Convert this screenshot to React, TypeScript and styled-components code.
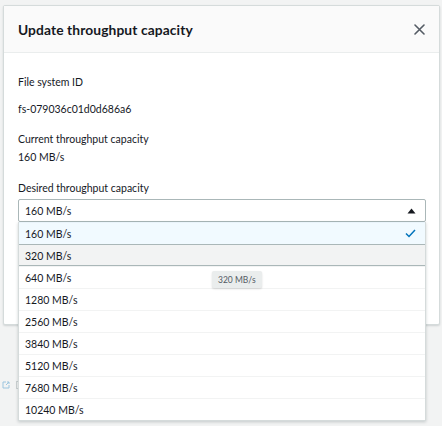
import React from "react";
import styled, { createGlobalStyle } from "styled-components";

const Global = createGlobalStyle`
  html, body { margin: 0; padding: 0; background: #f2f3f3; }
  body { font-family: Lato, "Liberation Sans", Arial, sans-serif; color: #16191f; }
  * { box-sizing: border-box; }
`;

const Page = styled.div`
  position: relative;
  width: 442px;
  height: 426px;
  padding: 5px 2px 0 3px;
  overflow: hidden;
`;

const Modal = styled.div`
  width: 437px;
  background: #fff;
  border: 1px solid #d5dbdb;
  border-radius: 2px;
  box-shadow: 0 1px 2px rgba(0, 28, 36, 0.15);
`;

const Header = styled.div`
  height: 47px;
  background: #fafafa;
  border-bottom: 1px solid #eaeded;
  display: flex;
  align-items: center;
  justify-content: space-between;
  padding: 0 13px 0 14px;
`;

const Title = styled.h2`
  margin: 0;
  font-size: 13.8px;
  font-weight: 700;
  color: #16191f;
  letter-spacing: 0.1px;
`;

const Close = styled.button`
  border: 0;
  background: none;
  padding: 0;
  width: 14px;
  height: 14px;
  display: flex;
  align-items: center;
  justify-content: center;
`;

const Body = styled.div`
  padding: 22px 13px 0 14px;
  display: flex;
  flex-direction: column;
`;

const Text = styled.div<{ $mt?: number }>`
  font-size: 10.5px;
  line-height: 14px;
  margin-top: ${(p) => p.$mt ?? 0}px;
  color: #16191f;
`;

const SelectWrap = styled.div`
  position: relative;
  margin-top: 4px;
`;

const SelectBox = styled.div`
  height: 23px;
  border: 1px solid #aab7b8;
  border-radius: 2px;
  display: flex;
  align-items: center;
  justify-content: space-between;
  padding: 0 9px 0 6px;
  font-size: 10.5px;
  background: #fff;
`;

const Footer = styled.div`
  margin-top: 62px;
  height: 40px;
  border-top: 1px solid #f2f3f3;
`;

const List = styled.ul`
  position: absolute;
  top: 23px;
  left: 0;
  right: 0;
  margin: 0;
  padding: 0;
  list-style: none;
  background: #fff;
  border: 1px solid #d5dbdb;
  border-top: 0;
  box-shadow: 0 1px 3px rgba(0, 28, 36, 0.2);
  z-index: 2;
`;

const Item = styled.li<{ $state?: "selected" | "hover" }>`
  height: 22px;
  display: flex;
  align-items: center;
  justify-content: space-between;
  padding: 0 9px 0 6px;
  font-size: 10.5px;
  border-top: 1px solid
    ${(p) => (p.$state === "hover" ? "#aab7b8" : p.$state === "selected" ? "#eaf4fb" : "#f2f3f3")};
  box-shadow: ${(p) => (p.$state === "hover" ? "inset 0 -1px 0 #aab7b8" : "none")};
  background: ${(p) => (p.$state === "selected" ? "#f1faff" : p.$state === "hover" ? "#f2f3f3" : "#fff")};
  & + & { }
`;

const Tooltip = styled.div`
  position: absolute;
  left: 212px;
  top: 271px;
  height: 17px;
  padding: 0 6px;
  background: #eaeded;
  border-radius: 2px;
  box-shadow: 0 1px 2px rgba(0, 0, 0, 0.15);
  font-size: 8.5px;
  color: #545b64;
  display: flex;
  align-items: center;
  z-index: 3;
`;

const Ghost = styled.div`
  position: absolute;
  left: 2px;
  top: 381px;
  display: flex;
  gap: 6px;
  opacity: 0.35;
`;

const options = ["160", "320", "640", "1280", "2560", "3840", "5120", "7680", "10240"];

export default function App() {
  return (
    <>
      <Global />
      <Page>
        <Modal>
          <Header>
            <Title>Update throughput capacity</Title>
            <Close aria-label="Close">
              <svg width="11" height="11" viewBox="0 0 11 11">
                <path d="M1 1l9 9M10 1l-9 9" stroke="#545b64" strokeWidth="1.6" strokeLinecap="round" />
              </svg>
            </Close>
          </Header>
          <Body>
            <Text>File system ID</Text>
            <Text $mt={13}>fs-079036c01d0d686a6</Text>
            <Text $mt={16}>Current throughput capacity</Text>
            <Text $mt={4}>160 MB/s</Text>
            <Text $mt={17}>Desired throughput capacity</Text>
            <SelectWrap>
              <SelectBox>
                <span>160 MB/s</span>
                <svg width="9" height="6" viewBox="0 0 9 6">
                  <path d="M0.5 5.5L4.5 0.5L8.5 5.5Z" fill="#16191f" />
                </svg>
              </SelectBox>
              <List>
                {options.map((o, i) => (
                  <Item key={o} $state={i === 0 ? "selected" : i === 1 ? "hover" : undefined}>
                    <span>{o} MB/s</span>
                    {i === 0 && (
                      <svg width="11" height="9" viewBox="0 0 11 9">
                        <path d="M1 4.5l3 3L10 1" stroke="#0073bb" strokeWidth="1.5" fill="none" />
                      </svg>
                    )}
                  </Item>
                ))}
              </List>
            </SelectWrap>
            <Footer />
          </Body>
        </Modal>
        <Tooltip>320 MB/s</Tooltip>
        <Ghost>
          <svg width="8" height="8" viewBox="0 0 8 8">
            <path d="M1 1h3M1 1v6h6V4M4 4l3-3M5 1h2v2" stroke="#0073bb" fill="none" />
          </svg>
          <svg width="4" height="8" viewBox="0 0 4 8">
            <rect x="0.5" y="0.5" width="3" height="7" stroke="#879596" fill="none" />
          </svg>
        </Ghost>
      </Page>
    </>
  );
}
